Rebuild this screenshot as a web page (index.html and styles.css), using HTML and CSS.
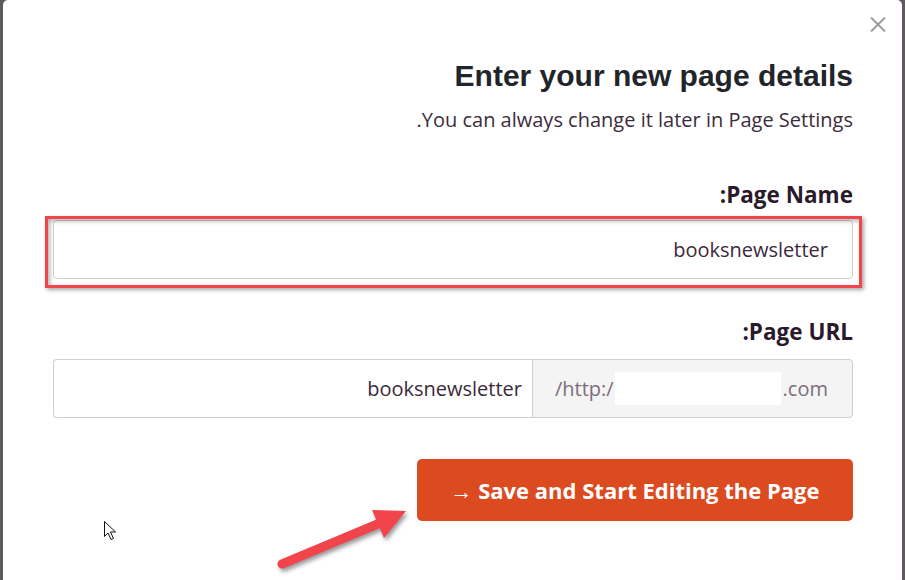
FILE: index.html
```html
<!DOCTYPE html>
<html lang="en">
  <head>
    <meta charset="UTF-8" />
    <meta name="viewport" content="width=device-width, initial-scale=1.0" />
    <title>New page</title>
    <link rel="stylesheet" href="styles.css">
  </head>
  <body>
    <div class="modal">
      <button class="close" type="button" aria-label="Close">
        <svg width="16" height="15" viewBox="0 0 16 15">
          <path d="M1 0.5 L15 14.5 M15 0.5 L1 14.5" stroke="#9b9b9b" stroke-width="2" fill="none" />
        </svg>
      </button>

      <h2 class="title">Enter your new page details</h2>
      <p class="subtitle">.You can always change it later in Page Settings</p>

      <form class="page-form">
        <div class="field field-name">
          <label for="page-name">:Page Name</label>
          <div class="highlight">
            <input type="text" id="page-name" class="text-input" value="booksnewsletter" />
          </div>
        </div>

        <div class="field field-url">
          <label for="page-url">:Page URL</label>
          <div class="input-group">
            <input type="text" id="page-url" class="text-input group-input" value="booksnewsletter" />
            <span class="addon">/http:/<span class="blank"></span>.com</span>
          </div>
        </div>

        <div class="actions">
          <button type="button" class="save-btn">&rarr; Save and Start Editing the Page</button>
        </div>
      </form>
    </div>

    <svg class="overlay" width="905" height="580" viewBox="0 0 905 580">
      <g class="pointer-arrow">
        <line x1="282" y1="564" x2="380" y2="523" stroke="#f2444b" stroke-width="9" stroke-linecap="round" />
        <polygon points="372,510 406,511 384,538" fill="#f2444b" />
      </g>
      <path class="cursor" d="M104.5 521.5 L104.5 536.5 L108 533 L111 539.5 L113.5 538.5 L110.5 532 L115.5 532 Z" fill="#fff" stroke="#111" stroke-width="1" />
    </svg>
  </body>
</html>
```

FILE: styles.css
```css
html,
body {
  margin: 0;
  height: 100%;
}
body {
  position: relative;
  background-color: #5e5a5f;
  overflow: hidden;
  font-family: "Open Sans", "Liberation Sans", sans-serif;
}
.modal {
  position: relative;
  box-sizing: border-box;
  margin: 0 3px 0 3px;
  height: 100%;
  padding: 59px 49px 0 50px;
  background-color: #fff;
  border-radius: 5px 5px 0 0;
}
.close {
  position: absolute;
  top: 17px;
  right: 16px;
  padding: 0;
  border: none;
  background: none;
  line-height: 0;
}
.title {
  margin: 0;
  text-align: right;
  font-family: "Liberation Sans", Arial, sans-serif;
  font-size: 30px;
  font-weight: bold;
  line-height: 34px;
  color: #212529;
}
.subtitle {
  margin: 13px 0 0 0;
  text-align: right;
  font-size: 20px;
  line-height: 27px;
  color: #3b2d3b;
}

.page-form {
  margin-top: 48px;
}
.field label {
  display: block;
  margin-bottom: 12px;
  text-align: right;
  font-size: 22.5px;
  font-weight: bold;
  line-height: 27px;
  color: #2b1a2b;
}
.field-url {
  margin-top: 39px;
}
.field-url label {
  margin-bottom: 14px;
}

.text-input {
  box-sizing: border-box;
  display: block;
  width: 100%;
  height: 59px;
  margin: 0;
  padding: 0 24px;
  border: 1px solid #cfcfcf;
  border-radius: 4px;
  background: #fff;
  text-align: right;
  font-family: "Open Sans", sans-serif;
  font-size: 20px;
  color: #3b2a3b;
  outline: none;
}

.highlight {
  position: relative;
}
.highlight::after {
  content: "";
  position: absolute;
  top: -4px;
  left: -8px;
  right: -9px;
  bottom: -9px;
  border: 3px solid #f2444b;
  box-shadow: 2px 2px 4px rgba(0, 0, 0, 0.35), inset 2px 2px 4px rgba(0, 0, 0, 0.3);
  pointer-events: none;
}

.input-group {
  display: flex;
}
.group-input {
  flex: 1;
  width: auto;
  padding-right: 10px;
  border-right: none;
  border-radius: 4px 0 0 4px;
}
.addon {
  flex: 0 0 321px;
  box-sizing: border-box;
  display: flex;
  align-items: center;
  height: 59px;
  padding: 0 24px 0 22px;
  border: 1px solid #cfcfcf;
  border-radius: 0 4px 4px 0;
  background-color: #f4f4f4;
  font-size: 20px;
  color: #7b6e7b;
  white-space: nowrap;
}
.blank {
  flex: 1;
  height: 33px;
  margin: 0 2px 0 1px;
  background-color: #fff;
}

.actions {
  display: flex;
  justify-content: flex-end;
  margin-top: 41px;
}
.save-btn {
  width: 436px;
  height: 62px;
  padding: 0;
  border: none;
  border-radius: 5px;
  background-color: #dc4a1f;
  color: #fff;
  font-family: "Open Sans", sans-serif;
  font-size: 22px;
  font-weight: 700;
}

.overlay {
  position: absolute;
  left: 0;
  top: 0;
  pointer-events: none;
}
.pointer-arrow {
  filter: drop-shadow(2px 3px 2px rgba(0, 0, 0, 0.4));
}
```
